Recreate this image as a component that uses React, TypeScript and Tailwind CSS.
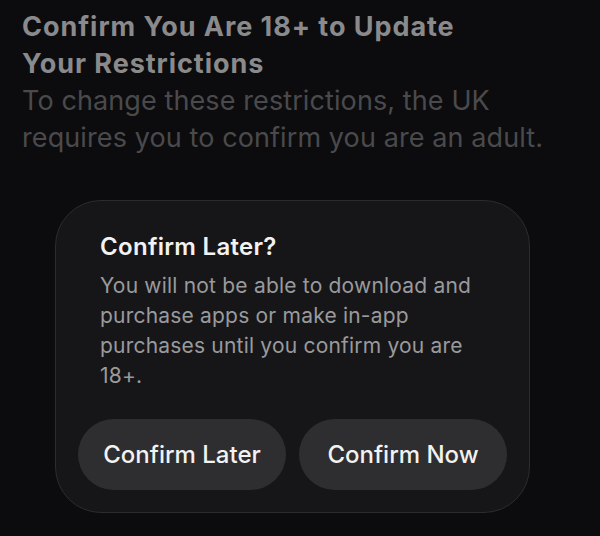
export default function App() {
  return (
    <div
      className="w-[600px] h-[536px] overflow-hidden bg-[#0c0c0e] px-[22px] pt-[8px]"
      style={{ fontFamily: "Inter, 'Noto Sans', sans-serif" }}
    >
      <h1 className="text-[27px] leading-[37px] font-bold text-[#8a8a8c] tracking-[0.95px]">
        Confirm You Are 18+ to Update
        <br />
        Your Restrictions
      </h1>
      <p className="text-[27px] leading-[37px] text-[#4a4a4c] tracking-[0.1px]">
        To change these restrictions, the UK
        <br />
        requires you to confirm you are an adult.
      </p>

      <div className="mt-[44px] ml-[33px] w-[475px] h-[313px] rounded-[46px] border border-[#2c2c2e] bg-[#161618] px-[22px] pb-[22px] pt-[31px] flex flex-col">
        <div className="px-[22px]">
          <h2 className="text-[24px] leading-[30px] font-semibold text-[#f2f2f2] tracking-[0.3px]">
            Confirm Later?
          </h2>
          <p className="mt-[9px] text-[21px] leading-[30px] text-[#9a9a9c] tracking-[0.2px]">
            You will not be able to download and
            <br />
            purchase apps or make in-app
            <br />
            purchases until you confirm you are
            <br />
            18+.
          </p>
        </div>
        <div className="mt-auto flex gap-[13px]">
          <button className="flex-1 h-[71px] rounded-full bg-[#2e2e30] text-[24px] font-medium text-[#f2f2f2]">
            Confirm Later
          </button>
          <button className="flex-1 h-[71px] rounded-full bg-[#2e2e30] text-[24px] font-medium text-[#f2f2f2]">
            Confirm Now
          </button>
        </div>
      </div>
    </div>
  );
}
